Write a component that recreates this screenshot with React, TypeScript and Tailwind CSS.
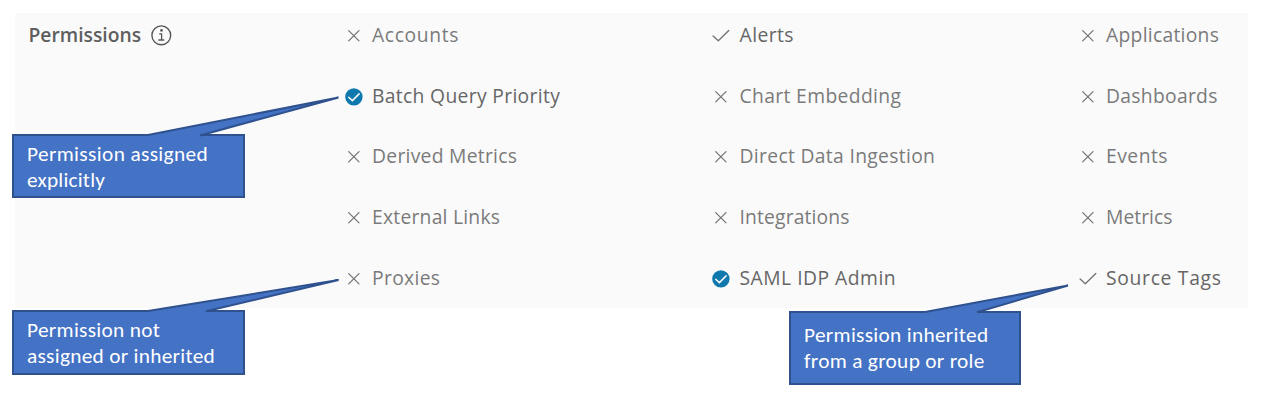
type Status = "none" | "inherited" | "explicit";

interface Permission {
  name: string;
  status: Status;
  tracking: string;
}

const permissions: Permission[] = [
  { name: "Accounts", status: "none", tracking: "tracking-[0.64px]" },
  { name: "Alerts", status: "inherited", tracking: "tracking-[0.44px]" },
  { name: "Applications", status: "none", tracking: "tracking-[0.28px]" },
  { name: "Batch Query Priority", status: "explicit", tracking: "tracking-[0.33px]" },
  { name: "Chart Embedding", status: "none", tracking: "tracking-[0.36px]" },
  { name: "Dashboards", status: "none", tracking: "tracking-[0.3px]" },
  { name: "Derived Metrics", status: "none", tracking: "tracking-[0.28px]" },
  { name: "Direct Data Ingestion", status: "none", tracking: "tracking-[0.33px]" },
  { name: "Events", status: "none", tracking: "tracking-[0.5px]" },
  { name: "External Links", status: "none", tracking: "tracking-[0.24px]" },
  { name: "Integrations", status: "none", tracking: "tracking-[0.15px]" },
  { name: "Metrics", status: "none", tracking: "tracking-[0.05px]" },
  { name: "Proxies", status: "none", tracking: "tracking-[0.33px]" },
  { name: "SAML IDP Admin", status: "explicit", tracking: "tracking-[0.49px]" },
  { name: "Source Tags", status: "inherited", tracking: "tracking-[0.7px]" },
];

function StatusIcon({ status }: { status: Status }) {
  return (
    <svg viewBox="0 0 20 20" className="size-5 shrink-0" fill="none">
      {status === "none" && (
        <path d="M4.7 5.6 15 15.9M15 5.6 4.7 15.9" stroke="#737373" strokeWidth="1.25" strokeLinecap="round" />
      )}
      {status === "inherited" && (
        <path d="M2.1 11 7.3 15.7 17.8 5.5" stroke="#737373" strokeWidth="1.35" strokeLinecap="round" strokeLinejoin="round" />
      )}
      {status === "explicit" && (
        <>
          <circle cx="9.9" cy="10.9" r="8.7" fill="#0f79ad" />
          <path d="M4.7 11.2 8.4 14.6 15.1 7.9" stroke="#fafafa" strokeWidth="1.5" strokeLinecap="round" />
        </>
      )}
    </svg>
  );
}

function InfoIcon() {
  return (
    <svg viewBox="0 0 22 22" className="size-[22px] shrink-0" fill="none" stroke="#565656">
      <circle cx="11.3" cy="11.3" r="9.4" strokeWidth="1.4" />
      <circle cx="11.5" cy="6.4" r="1.3" fill="#565656" stroke="none" />
      <path d="M9.2 9.8H11.6V15.8M8.4 16H14.2" strokeWidth="1.3" />
    </svg>
  );
}

function PermissionItem({ name, status, tracking }: Permission) {
  return (
    <div className="flex items-center">
      <StatusIcon status={status} />
      <span
        className={`ml-[8.5px] whitespace-nowrap text-[19.3px] leading-6 ${tracking} ${
          status === "none" ? "text-[#7a7a7a]" : "text-[#666666]"
        }`}
      >
        {name}
      </span>
    </div>
  );
}

interface CalloutProps {
  place: string;
  lines: { text: string; tracking: string }[];
}

function Callout({ place, lines }: CalloutProps) {
  return (
    <div
      className={`absolute border-2 border-[#2f528f] bg-[#4472c4] pl-[13px] font-[Calibri,Carlito,Lato,sans-serif] text-[21.33px] leading-[26px] text-white ${place}`}
    >
      {lines.map((line) => (
        <div key={line.text} className={`whitespace-nowrap ${line.tracking}`}>
          {line.text}
        </div>
      ))}
    </div>
  );
}

export default function App() {
  return (
    <div className="relative h-[408px] w-[1268px] overflow-hidden bg-white pt-[13px] pl-[15px] font-['Open_Sans',sans-serif]">
      <section className="flex h-[295px] w-[1233px] bg-[#fafafa]">
        <div className="flex h-11 w-[328.5px] items-center gap-[9px] pl-[13.5px]">
          <h2 className="text-[19.3px] leading-6 font-semibold text-[#5e5e5e]">Permissions</h2>
          <InfoIcon />
        </div>
        <div className="-mt-[8px] grid auto-rows-[60.6px] grid-cols-[367.5px_366.5px_160px]">
          {permissions.map((permission) => (
            <PermissionItem key={permission.name} {...permission} />
          ))}
        </div>
      </section>

      <Callout
        place="left-3 top-[134px] h-16 w-[233px] pt-[5px]"
        lines={[
          { text: "Permission assigned", tracking: "tracking-[0.36px]" },
          { text: "explicitly", tracking: "tracking-[0.2px]" },
        ]}
      />
      <Callout
        place="left-3 top-[310px] h-[65px] w-[233px] pt-[5px]"
        lines={[
          { text: "Permission not", tracking: "tracking-[0.3px]" },
          { text: "assigned or inherited", tracking: "tracking-[0.28px]" },
        ]}
      />
      <Callout
        place="left-[789px] top-[311px] h-[74px] w-[232px] pt-[9px]"
        lines={[
          { text: "Permission inherited", tracking: "tracking-[0.3px]" },
          { text: "from a group or role", tracking: "tracking-[0.3px]" },
        ]}
      />

      <svg
        viewBox="0 0 1268 408"
        className="pointer-events-none absolute inset-0 h-[408px] w-[1268px]"
        fill="#4472c4"
        stroke="#2f528f"
        strokeWidth="2"
        strokeLinejoin="bevel"
      >
        <path d="M148 136.5V135L338.5 97.5 202 135V136.5Z" stroke="none" />
        <path d="M148 135 338.5 97.5 200 135.5" fill="none" />
        <path d="M148 312.5V311L338.5 280 207 311V312.5Z" stroke="none" />
        <path d="M148 311 338.5 280 206 311.3" fill="none" />
        <path d="M925 313.5V312L1068 285.5 978 312V313.5Z" stroke="none" />
        <path d="M925 312 1068 285.5 977 312.3" fill="none" />
      </svg>
    </div>
  );
}
